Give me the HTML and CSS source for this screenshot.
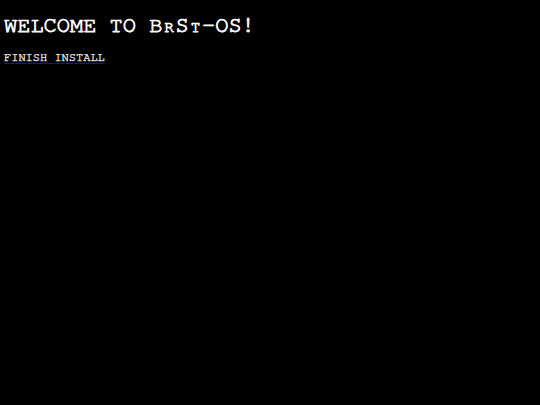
FILE: index.html
```html
<!DOCTYPE html>
<html>
<head>
<meta charset="utf-8">
<link rel="stylesheet" href="styles.css">
</head>
<body>
<main class="screen">
  <h1 class="title">WELCOME TO B<span class="sc">r</span>S<span class="sc">t</span>-OS!</h1>
  <a class="install" href="#">FINISH INSTALL</a>
</main>
</body>
</html>
```
FILE: styles.css
```css
html, body {
  margin: 0;
  padding: 0;
  background: #000;
}
.screen {
  display: flex;
  flex-direction: column;
  align-items: flex-start;
  padding: 13px 4px 0 4px;
  font-family: "FreeMono", "Courier New", monospace;
  color: #fff;
}
.title {
  margin: 0 0 10px 0;
  font-size: 22px;
  font-weight: normal;
  -webkit-text-stroke: 0.8px #fff;
  line-height: 25px;
  color: #fff;
}
.sc {
  display: inline-block;
  width: 0.8333em;
  text-align: center;
  text-transform: uppercase;
  font-size: 0.72em;
}
.install {
  font-size: 12px;
  font-weight: normal;
  -webkit-text-stroke: 0.5px #d4d4d4;
  line-height: 14px;
  color: #d4d4d4;
  text-decoration: underline;
  text-decoration-color: #1a1a80;
  text-decoration-thickness: 1px;
  text-underline-offset: 2px;
}
```
